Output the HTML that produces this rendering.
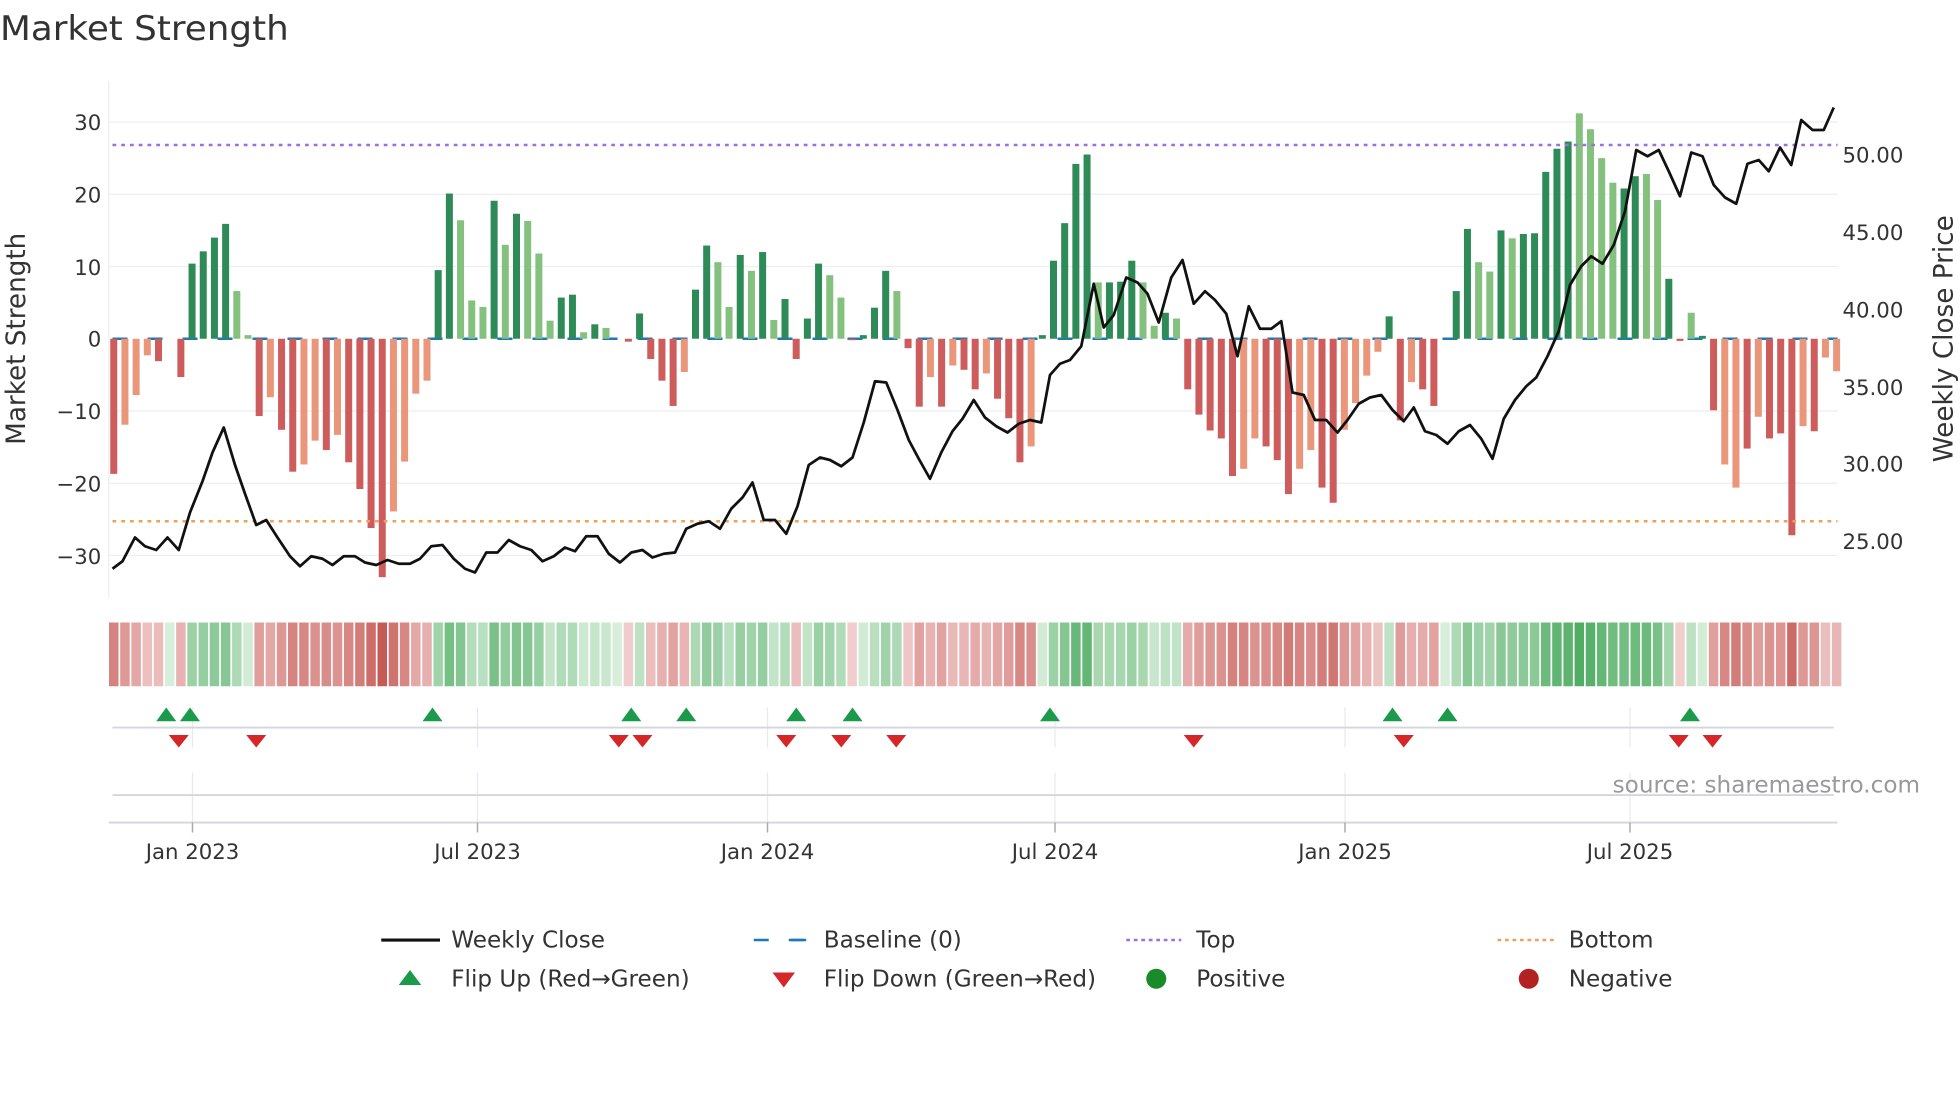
<!DOCTYPE html>
<html><head><meta charset="utf-8"><style>
html,body{margin:0;padding:0;background:#fff;}
svg{display:block;}
.c{font-family:"DejaVu Sans","Liberation Sans",sans-serif;}
.r{font-family:"DejaVu Sans","Liberation Sans",sans-serif;}
</style></head><body>
<svg id="s" width="1960" height="1102" viewBox="0 0 1568 881.6" xmlns="http://www.w3.org/2000/svg">
<rect width="1568" height="881.6" fill="#fff"/>
<text x="0" y="32" class="c" font-size="27" fill="#333" textLength="231" lengthAdjust="spacingAndGlyphs">Market Strength</text>
<g id="grid" stroke="#eceef3" stroke-width="1"></g>
<line x1="87" y1="65" x2="87" y2="478" stroke="#eceef3"/>
<g class="c" font-size="17" fill="#333" text-anchor="end">
<text x="81" y="104">30</text><text x="81" y="162">20</text><text x="81" y="220">10</text><text x="81" y="277">0</text>
<text x="81" y="335">−10</text><text x="81" y="393">−20</text><text x="81" y="451">−30</text>
</g>
<g class="c" font-size="17" fill="#333">
<text x="1474" y="130">50.00</text><text x="1474" y="192">45.00</text><text x="1474" y="254">40.00</text>
<text x="1474" y="316">35.00</text><text x="1474" y="377">30.00</text><text x="1474" y="439">25.00</text>
</g>
<text class="r" font-size="21" fill="#333" transform="translate(20,271) rotate(-90)" text-anchor="middle">Market Strength</text>
<text class="r" font-size="21" fill="#333" transform="translate(1562,271) rotate(-90)" text-anchor="middle">Weekly Close Price</text>
<line x1="90" y1="271" x2="1470" y2="271" stroke="#1f77b4" stroke-width="2" stroke-dasharray="12,16"/>
<g id="bars"></g>
<line x1="90" y1="116" x2="1470" y2="116" stroke="#a06ee0" stroke-width="2" stroke-dasharray="3,4"/>
<line x1="90" y1="417" x2="1470" y2="417" stroke="#f0a05a" stroke-width="2" stroke-dasharray="3,4"/>
<polyline id="price" fill="none" stroke="#111" stroke-width="2.2" stroke-linejoin="round"/>
<g id="heat"></g>
<g stroke="#e8eaf0" stroke-width="1">
<line x1="154" y1="566" x2="154" y2="598"/><line x1="382" y1="566" x2="382" y2="598"/><line x1="614" y1="566" x2="614" y2="598"/><line x1="844" y1="566" x2="844" y2="598"/><line x1="1076" y1="566" x2="1076" y2="598"/><line x1="1304" y1="566" x2="1304" y2="598"/>
<line x1="154" y1="618" x2="154" y2="658"/><line x1="382" y1="618" x2="382" y2="658"/><line x1="614" y1="618" x2="614" y2="658"/><line x1="844" y1="618" x2="844" y2="658"/><line x1="1076" y1="618" x2="1076" y2="658"/><line x1="1304" y1="618" x2="1304" y2="658"/>
</g>
<line x1="90" y1="582" x2="1467" y2="582" stroke="#d4d6dc" stroke-width="1.5"/>
<line x1="90" y1="636" x2="1467" y2="636" stroke="#d4d6dc" stroke-width="1.5"/>
<line x1="87" y1="658" x2="1470" y2="658" stroke="#d4d6dc" stroke-width="1.5"/>
<g stroke="#aaa" stroke-width="1.2">
<line x1="154" y1="658" x2="154" y2="666"/><line x1="382" y1="658" x2="382" y2="666"/><line x1="614" y1="658" x2="614" y2="666"/><line x1="844" y1="658" x2="844" y2="666"/><line x1="1076" y1="658" x2="1076" y2="666"/><line x1="1304" y1="658" x2="1304" y2="666"/>
</g>
<g id="marks"></g>
<text x="1536" y="634" class="r" font-size="18.5" fill="#999" text-anchor="end">source: sharemaestro.com</text>
<g class="c" font-size="17" fill="#333" text-anchor="middle">
<text x="154" y="687">Jan 2023</text><text x="382" y="687">Jul 2023</text><text x="614" y="687">Jan 2024</text>
<text x="844" y="687">Jul 2024</text><text x="1076" y="687">Jan 2025</text><text x="1304" y="687">Jul 2025</text>
</g>
<g class="r" font-size="18.5" fill="#333">
<line x1="305" y1="752" x2="352" y2="752" stroke="#111" stroke-width="2.5"/>
<text x="361" y="758">Weekly Close</text>
<line x1="603" y1="752" x2="645" y2="752" stroke="#1f77b4" stroke-width="2" stroke-dasharray="12,16"/>
<line x1="633" y1="752" x2="645" y2="752" stroke="#1f77b4" stroke-width="2"/>
<text x="659" y="758">Baseline (0)</text>
<line x1="901" y1="752" x2="945" y2="752" stroke="#a06ee0" stroke-width="2" stroke-dasharray="3,3"/>
<text x="957" y="758">Top</text>
<line x1="1198" y1="752" x2="1243" y2="752" stroke="#f0a05a" stroke-width="2" stroke-dasharray="3,3"/>
<text x="1255" y="758">Bottom</text>
<polygon points="319,788 337,788 328,776" fill="#1a9a4a"/>
<text x="361" y="789">Flip Up (Red→Green)</text>
<polygon points="618,778 636,778 627,790" fill="#d62728"/>
<text x="659" y="789">Flip Down (Green→Red)</text>
<circle cx="925" cy="783" r="8" fill="#1a8a2a"/>
<text x="957" y="789">Positive</text>
<circle cx="1223" cy="783" r="8" fill="#b22222"/>
<text x="1255" y="789">Negative</text>
</g>
</svg>
<script>
(function(){
var NS="http://www.w3.org/2000/svg";
function el(t,a,p){var e=document.createElementNS(NS,t);for(var k in a)e.setAttribute(k,a[k]);document.getElementById(p).appendChild(e);return e;}
[30,20,10,-10,-20,-30].forEach(function(v){var y=271-v*5.78;el("line",{x1:87,y1:y,x2:1470,y2:y},"grid");});
var v=[-18.7,-11.9,-7.8,-2.3,-3.1,0,-5.3,10.4,12.1,14,15.9,6.6,0.5,-10.7,-8.1,-12.6,-18.4,-17.4,-14.1,-15.4,-13.3,-17.1,-20.8,-26.2,-33,-23.9,-17,-7.6,-5.8,9.5,20.1,16.4,5.3,4.4,19.1,13,17.3,16.3,11.8,2.5,5.7,6.1,0.9,2,1.5,0,-0.4,3.5,-2.8,-5.8,-9.3,-4.6,6.8,12.9,10.6,4.4,11.6,9.4,12,2.6,5.5,-2.8,2.8,10.4,8.8,5.7,-0.2,0.5,4.3,9.4,6.6,-1.3,-9.4,-5.3,-9.4,-3.7,-4.3,-7,-4.8,-8.3,-11,-17.1,-14.9,0.5,10.8,16,24.2,25.5,7.8,7.8,7.9,10.8,7.8,1.8,3.6,2.8,-7,-10.5,-12.7,-13.8,-19,-18,-13.8,-14.9,-16.8,-21.5,-18,-15.4,-20.6,-22.7,-12.6,-8.9,-5.1,-1.8,3.1,-11.3,-6,-7,-9.3,0,6.6,15.2,10.6,9.3,15,13.9,14.5,14.6,23.1,26.3,27.3,31.2,29,25,21.6,20.8,22.5,22.8,19.2,8.3,-0.3,3.6,0.4,-9.9,-17.4,-20.6,-15.2,-10.8,-13.8,-13.1,-27.2,-12.1,-12.8,-2.6,-4.5];
var d="DLLLDLDDDDDLLDLDDLLDLDDDDLLLLDDLLLDLDLLLDDLDLLDDDDDLDDLLDLDLDDDDLLDDDDLDDLDLDDLDDDLDDDDDLDDDLLDLDDDDDLLDDDLLDDLLLLDDLDDLDDLLDLDDDDDLLLLDDLLDDLDDLLDLDDDLD";
var S=8.95;
for(var i=0;i<v.length;i++){
 var x=91+S*i, val=v[i], dk=d[i]==="D";
 if(val!==0){
  var h=Math.abs(val)*5.78, y=val>0?271-h:271;
  var col=val>0?(dk?"#2e8b57":"#85c17e"):(dk?"#cd5c5c":"#e9967a");
  el("rect",{x:x-2.8,y:y,width:5.6,height:Math.max(h,0.8),fill:col},"bars");
 }
 var t=Math.pow(Math.min(1,Math.abs(val)/33),0.75), c;
 if(val>=0){c=[Math.round(215-(215-75)*t),Math.round(238-(238-170)*t),Math.round(218-(218-95)*t)];}
 else{c=[Math.round(242-(242-198)*t),Math.round(208-(208-90)*t),Math.round(208-(208-85)*t)];}
 el("rect",{x:x-3.8,y:498,width:7.6,height:51,fill:"rgb("+c.join(",")+")"},"heat");
}
var p=[[90,455],[98,449],[108,430],[116,437],[125,440],[134,430],[143,440],[152,410],[162,385],[170,362],[179,342],[188,372],[196,395],[205,420],[213,416],[222,430],[232,445],[240,453],[249,445],[258,447],[266,452],[275,445],[284,445],[292,450],[301,452],[310,448],[319,451],[328,451],[336,447],[345,437],[354,436],[363,447],[372,455],[380,458],[389,442],[398,442],[407,432],[416,437],[425,440],[434,449],[443,445],[452,438],[460,441],[469,429],[478,429],[487,443],[496,450],[505,442],[514,440],[522,446],[531,443],[540,442],[549,423],[558,419],[567,417],[576,423],[585,407],[594,398],[602,386],[611,416],[620,416],[629,427],[638,405],[647,372],[656,366],[664,368],[673,373],[682,366],[691,338],[700,305],[709,306],[718,328],[727,352],[735,367],[744,383],[753,362],[762,345],[770,335],[779,320],[788,334],[797,341],[806,346],[815,339],[824,336],[833,338],[840,300],[848,291],[856,288],[865,277],[875,227],[883,262],[891,252],[901,222],[910,226],[918,235],[927,258],[937,222],[946,208],[955,243],[964,233],[972,240],[981,251],[990,285],[999,245],[1008,263],[1017,263],[1025,257],[1034,314],[1043,316],[1052,336],[1061,336],[1070,346],[1078,336],[1087,323],[1096,318],[1105,316],[1114,328],[1123,337],[1131,326],[1140,345],[1149,348],[1158,355],[1167,345],[1176,340],[1185,351],[1194,367],[1203,335],[1212,320],[1221,309],[1229,302],[1238,285],[1247,265],[1256,228],[1265,213],[1273,205],[1282,211],[1291,196],[1300,169],[1309,120],[1318,125],[1327,120],[1335,137],[1344,157],[1353,122],[1362,125],[1371,148],[1380,158],[1389,163],[1398,131],[1407,128],[1415,137],[1424,118],[1433,132],[1441,96],[1450,104],[1459,104],[1467,86]];
document.getElementById("price").setAttribute("points",p.map(function(q){return q.join(",");}).join(" "));
[133,152,346,505,549,637,682,840,1114,1158,1352].forEach(function(x){el("polygon",{points:(x-8)+",577 "+(x+8)+",577 "+x+",566",fill:"#1a9a4a"},"marks");});
[143,205,495,514,629,673,717,955,1123,1343,1370].forEach(function(x){el("polygon",{points:(x-8)+",588 "+(x+8)+",588 "+x+",598",fill:"#d62728"},"marks");});
})();
</script>
</body></html>
